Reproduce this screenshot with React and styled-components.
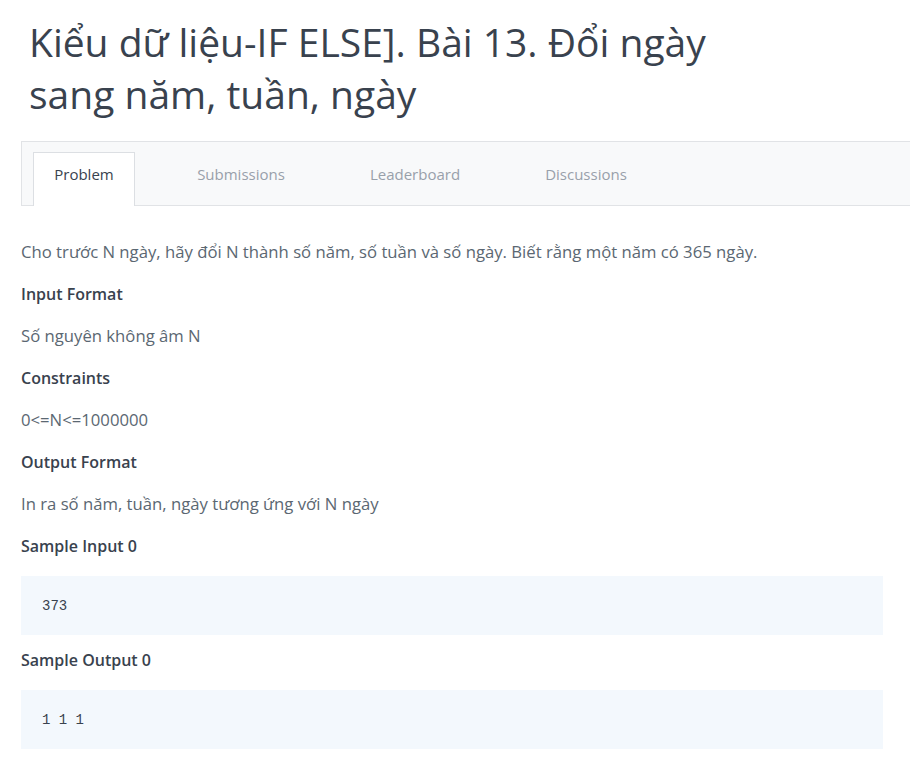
import React from "react";
import styled, { createGlobalStyle } from "styled-components";

const Global = createGlobalStyle`
  html, body { margin: 0; padding: 0; background: #ffffff; }
  body { font-family: "Open Sans", "Noto Sans", sans-serif; -webkit-font-smoothing: antialiased; }
`;

const Page = styled.div`
  width: 910px;
  padding: 0 0 0 21px;
  box-sizing: border-box;
  overflow: hidden;
`;

const Title = styled.h1`
  margin: 0;
  padding: 16px 0 0 8px;
  width: 730px;
  font-size: 39px;
  line-height: 52px;
  font-weight: 400;
  color: #39424e;
`;

const TabBar = styled.div`
  margin-top: 21px;
  height: 65px;
  display: flex;
  align-items: flex-end;
  padding-left: 11px;
  background: #f8f9fa;
  border: 1px solid #e1e3e6;
  border-right: none;
  box-sizing: border-box;
`;

const Tab = styled.div`
  width: ${p => p.$w}px;
  height: 54px;
  display: flex;
  align-items: center;
  justify-content: center;
  font-size: 15px;
  color: ${p => (p.$active ? "#39424e" : "#98a0aa")};
  background: ${p => (p.$active ? "#ffffff" : "transparent")};
  border: 1px solid ${p => (p.$active ? "#dcdfe3" : "transparent")};
  border-bottom: none;
  box-sizing: border-box;
  margin-bottom: -1px;
  padding-bottom: 11px;
`;

const Content = styled.div`
  padding-top: 35px;
  width: 862px;
`;

const Para = styled.p`
  margin: 0 0 20px;
  font-size: 16.7px;
  line-height: 22px;
  color: #5b6772;
`;

const Heading = styled.p`
  margin: 0 0 20px;
  font-size: 16px;
  line-height: 22px;
  font-weight: 600;
  color: #39424e;
`;

const Code = styled.pre`
  margin: -1px 0 14px;
  height: 59px;
  display: flex;
  align-items: center;
  padding: 0 21px;
  background: #f3f8fd;
  font-family: "Liberation Mono", "DejaVu Sans Mono", monospace;
  font-size: 14px;
  color: #39424e;
`;

const tabs = [
  { label: "Problem", w: 102, active: true },
  { label: "Submissions", w: 212 },
  { label: "Leaderboard", w: 136 },
  { label: "Discussions", w: 206 },
];

export default function App() {
  return (
    <Page>
      <Global />
      <Title>Kiểu dữ liệu-IF ELSE]. Bài 13. Đổi ngày sang năm, tuần, ngày</Title>
      <TabBar>
        {tabs.map(t => (
          <Tab key={t.label} $w={t.w} $active={t.active}>{t.label}</Tab>
        ))}
      </TabBar>
      <Content>
        <Para>Cho trước N ngày, hãy đổi N thành số năm, số tuần và số ngày. Biết rằng một năm có 365 ngày.</Para>
        <Heading>Input Format</Heading>
        <Para>Số nguyên không âm N</Para>
        <Heading>Constraints</Heading>
        <Para>0&lt;=N&lt;=1000000</Para>
        <Heading>Output Format</Heading>
        <Para>In ra số năm, tuần, ngày tương ứng với N ngày</Para>
        <Heading>Sample Input 0</Heading>
        <Code>373</Code>
        <Heading>Sample Output 0</Heading>
        <Code>1 1 1</Code>
      </Content>
    </Page>
  );
}
